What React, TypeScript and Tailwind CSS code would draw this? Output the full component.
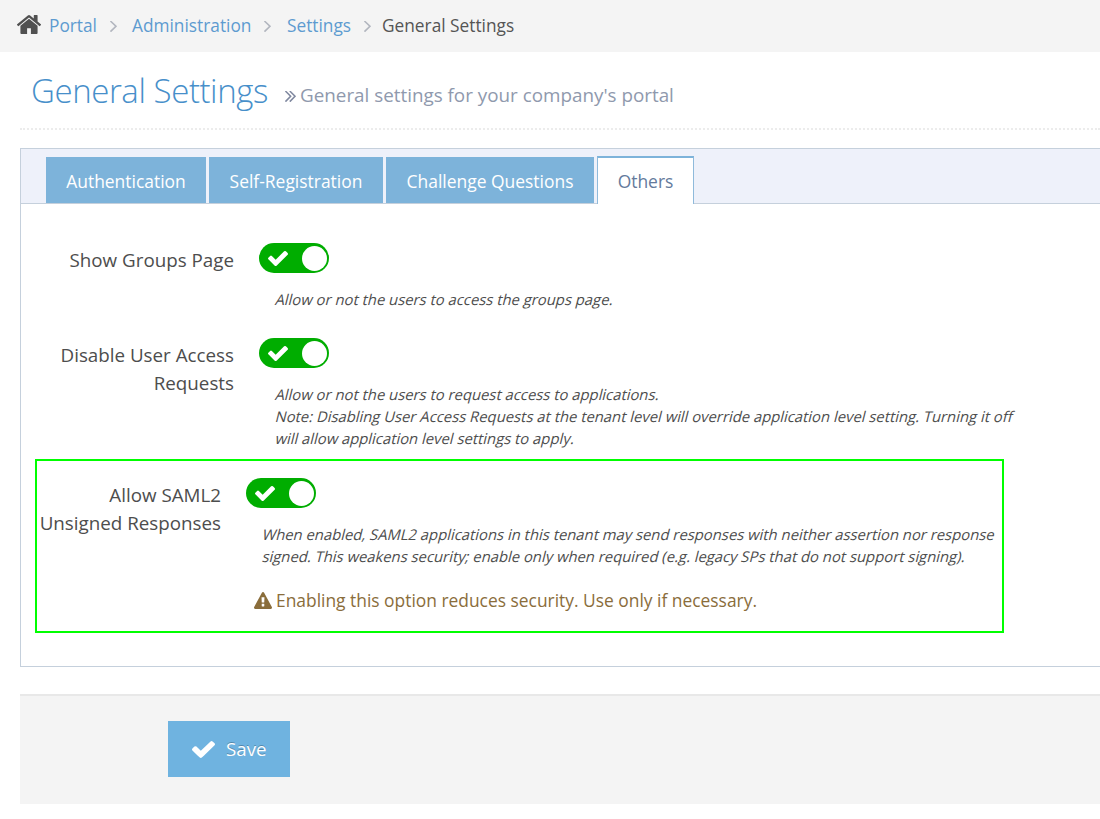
import React from "react";

const PATHS = {
  check:
    "M1671 566q0 40-28 68l-724 724-136 136q-28 28-68 28t-68-28l-136-136-362-362q-28-28-28-68t28-68l136-136q28-28 68-28t68 28l294 295 656-657q28-28 68-28t68 28l136 136q28 28 28 68z",
  home: "M1472 992v480q0 26-19 45t-45 19h-384v-384h-256v384h-384q-26 0-45-19t-19-45v-480q0-1 .5-3t.5-3l575-474 575 474q1 2 1 6zm223-69l-62 74q-8 9-21 11h-3q-13 0-21-7l-692-577-692 577q-12 8-24 7-13-2-21-11l-62-74q-8-10-7-23.5t11-21.5l719-599q32-26 76-26t76 26l244 204v-195q0-14 9-23t23-9h192q14 0 23 9t9 23v408l219 182q10 8 11 21.5t-7 23.5z",
  warning:
    "M1024 1375v-190q0-14-9.5-23.5t-22.5-9.5h-192q-13 0-22.5 9.5t-9.5 23.5v190q0 14 9.5 23.5t22.5 9.5h192q13 0 22.5-9.5t9.5-23.5zm-2-374l18-459q0-12-10-19-13-11-24-11h-220q-11 0-24 11-10 7-10 21l17 457q0 10 10 16.5t24 6.5h185q14 0 23.5-6.5t10.5-16.5zm-14-934l768 1408q35 63-2 126-17 29-46.5 46t-63.5 17h-1536q-34 0-63.5-17t-46.5-46q-37-63-2-126l768-1408q17-31 47-49t65-18 65 18 47 49z",
  angle:
    "M1171 960q0 13-10 23l-466 466q-10 10-23 10t-23-10l-50-50q-10-10-10-23t10-23l393-393-393-393q-10-10-10-23t10-23l50-50q10-10 23-10t23 10l466 466q10 10 10 23z",
  doubleAngle:
    "M979 960q0 13-10 23l-466 466q-10 10-23 10t-23-10l-50-50q-10-10-10-23t10-23l393-393-393-393q-10-10-10-23t10-23l50-50q10-10 23-10t23 10l466 466q10 10 10 23zm384 0q0 13-10 23l-466 466q-10 10-23 10t-23-10l-50-50q-10-10-10-23t10-23l393-393-393-393q-10-10-10-23t10-23l50-50q10-10 23-10t23 10l466 466q10 10 10 23z",
};

function Icon({ name, box = "0 0 1792 1792", className }: { name: keyof typeof PATHS; box?: string; className: string }) {
  return (
    <svg viewBox={box} preserveAspectRatio="none" className={`shrink-0 fill-current ${className}`} aria-hidden="true">
      <path d={PATHS[name]} />
    </svg>
  );
}

function Separator() {
  return <Icon name="angle" box="589 493 582 966" className="mt-px h-[11px] w-[7px] text-[#b2b6bf]" />;
}

function Toggle() {
  return (
    <button type="button" role="switch" aria-checked="true" className="flex h-[30px] w-[70px] items-center justify-between rounded-full bg-[#00ad00] pr-[2px] pl-[9px]">
      <Icon name="check" box="121 334 1550 1188" className="h-[15px] w-[20px] text-white" />
      <span className="size-[25px] rounded-full bg-white" />
    </button>
  );
}

function Help({ lines }: { lines: string[] }) {
  return (
    <div className="mt-[15px] ml-[17px] text-[14.82px] leading-[22px] whitespace-nowrap">
      {lines.map((line) => (
        <p key={line} className="-skew-x-[14deg]">{line}</p>
      ))}
    </div>
  );
}

function Setting({ label, children }: { label: React.ReactNode; children: React.ReactNode }) {
  return (
    <div className="flex">
      <div className="w-[200px] shrink-0 pt-[3px] text-right text-[18.8px] leading-[28px] whitespace-nowrap text-[#4d4d4d]">{label}</div>
      <div className="ml-[25px]">
        <Toggle />
        {children}
      </div>
    </div>
  );
}

function Tab({ children, className }: { children: string; className: string }) {
  return <button type="button" className={`flex h-[46px] items-center justify-center bg-[#7db3da] pt-px text-[17.45px] leading-[26px] text-white ${className}`}>{children}</button>;
}

export default function App() {
  return (
    <div className="h-[819px] w-[1100px] overflow-hidden bg-white font-['Open_Sans',sans-serif] text-[#4d4d4d]">
      <nav className="flex h-[52px] items-center bg-[#f4f4f4] pl-[17px] text-[17.3px] text-[#5d9bd0]">
        <Icon name="home" box="90 253 1612 1283" className="mb-[3px] h-[19px] w-[24px] text-[#505050]" />
        <a className="ml-[8px] w-[61px] whitespace-nowrap">Portal</a>
        <Separator />
        <a className="ml-[15px] w-[132px] whitespace-nowrap">Administration</a>
        <Separator />
        <a className="ml-[16px] w-[77px] whitespace-nowrap">Settings</a>
        <Separator />
        <span className="ml-[11px] text-[#555]">General Settings</span>
      </nav>

      <header className="ml-5 flex h-[78px] items-baseline border-b-2 border-dotted border-[#ececec] pt-[16px] pl-[11px]">
        <h1 className="w-[254px] text-[33px] leading-[46px] font-light tracking-[-0.42px] whitespace-nowrap text-[#478fca]">General Settings</h1>
        <div className="-mt-[2px] flex items-center self-start pt-[15px]">
          <Icon name="doubleAngle" box="397 493 966 966" className="mt-[3px] h-[11px] w-[11px] text-[#8089a0]" />
          <span className="ml-[4px] text-[18.83px] leading-[28px] text-[#8f99ad]">General settings for your company&apos;s portal</span>
        </div>
      </header>

      <main className="mt-[18px] ml-5 h-[519px] border border-r-0 border-[#c5d0dc]">
        <div className="flex h-[55px] items-end border-b border-[#c5d0dc] bg-[#eef1fa] pl-[25px]">
          <Tab className="w-[160px]">Authentication</Tab>
          <Tab className="ml-[3px] w-[174px]">Self-Registration</Tab>
          <Tab className="ml-[3px] w-[208px]">Challenge Questions</Tab>
          <button type="button" className="-mb-px ml-[3px] flex h-[48px] w-[97px] items-center justify-center border-x border-t-2 border-x-[#8fbadb] border-t-[#7db3da] bg-white pb-px text-[17.45px] leading-[26px] text-[#647a9c]">Others</button>
        </div>

        <section className="flex flex-col pt-[39px] pl-[13px]">
          <div className="h-[95px]">
            <Setting label="Show Groups Page">
              <Help lines={["Allow or not the users to access the groups page."]} />
            </Setting>
          </div>
          <div className="h-[121px]">
            <Setting label={<>Disable User Access<br />Requests</>}>
              <Help
                lines={[
                  "Allow or not the users to request access to applications.",
                  "Note: Disabling User Access Requests at the tenant level will override application level setting. Turning it off",
                  "will allow application level settings to apply.",
                ]}
              />
            </Setting>
          </div>
          <div className="ml-px h-[174px] w-[969px] border-[2.5px] border-[#00ff00] pt-[17px]">
            <div className="-ml-[16px]">
              <Setting label={<>Allow SAML2<br />Unsigned Responses</>}>
                <Help
                  lines={[
                    "When enabled, SAML2 applications in this tenant may send responses with neither assertion nor response",
                    "signed. This weakens security; enable only when required (e.g. legacy SPs that do not support signing).",
                  ]}
                />
                <p className="mt-[20px] ml-[8px] flex items-center text-[17.4px] leading-[26px] whitespace-nowrap text-[#8a6d3b]">
                  <Icon name="warning" box="0 0 1792 1664" className="mr-[4px] h-[17px] w-[18px]" />
                  Enabling this option reduces security. Use only if necessary.
                </p>
              </Setting>
            </div>
          </div>
        </section>
      </main>

      <footer className="mt-[27px] ml-5 h-[110px] border-t-2 border-[#e8e8e8] bg-[#f4f4f4] pt-[25px] pl-[148px]">
        <button type="button" className="flex h-[56px] w-[122px] items-center bg-[#6fb3e0] pl-[24px] text-[18.7px] text-white [text-shadow:0_-1px_0_rgba(0,0,0,.25)]">
          <Icon name="check" box="121 334 1550 1188" className="mr-[11px] h-[17px] w-[23px]" />
          Save
        </button>
      </footer>
    </div>
  );
}
